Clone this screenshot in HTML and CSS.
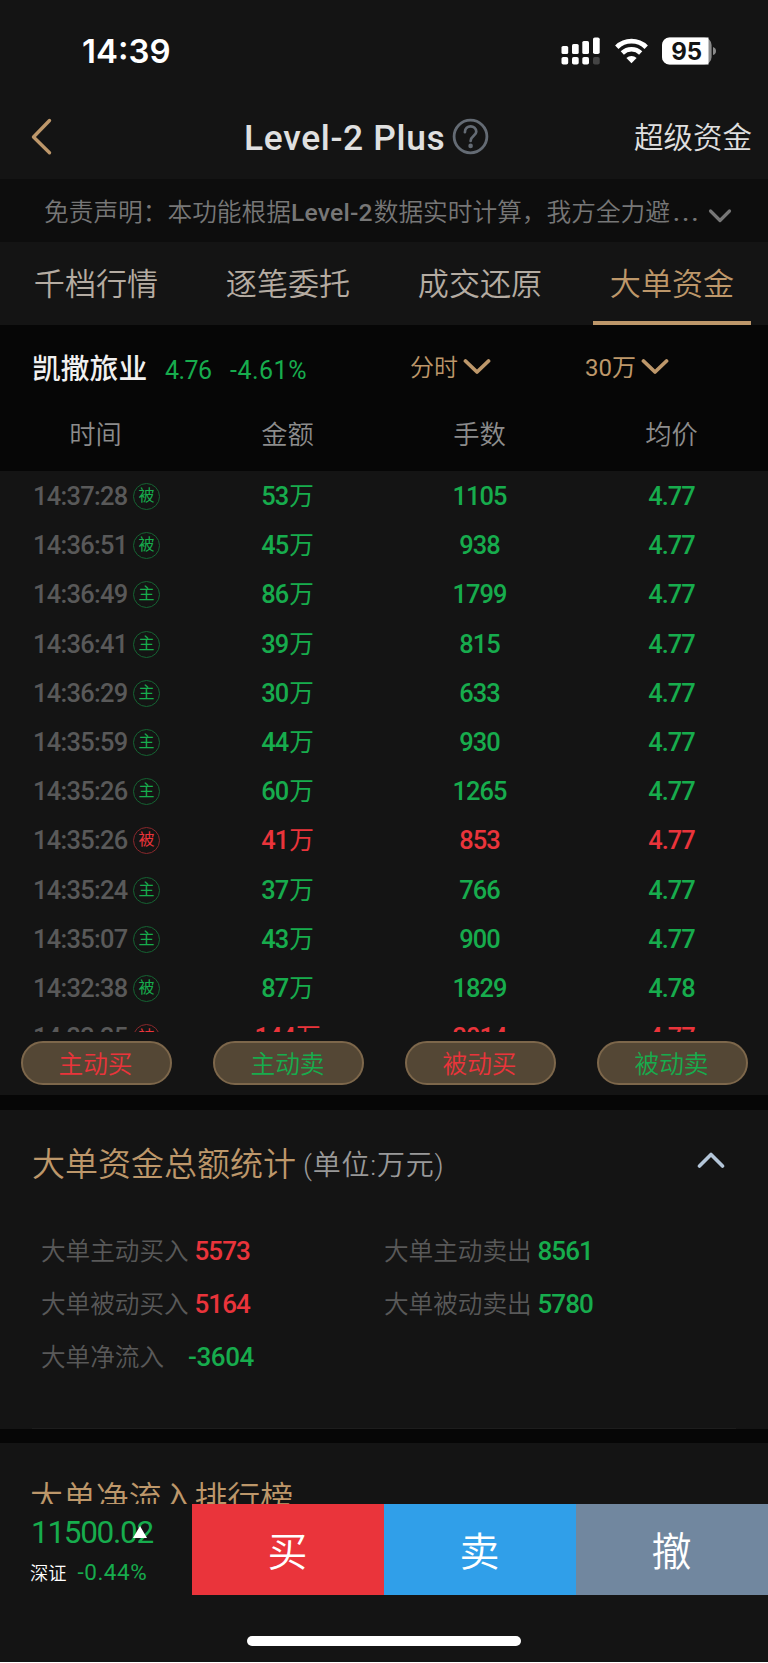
FILE: index.html
```
<!DOCTYPE html>
<html lang="zh-CN">
<head>
<meta charset="utf-8">
<title>Level-2 Plus</title>
<link rel="stylesheet" href="styles.css">
</head>
<body>
<div class="app">
  <header class="status">
    <span class="clock">14:39</span>
    <div class="status-icons">
      <svg class="signal" width="40" height="28" viewBox="0 0 40 28" fill="#fff">
        <rect x="0.5" y="9" width="6.7" height="8" rx="1.6"/><rect x="11" y="7" width="6.7" height="10" rx="1.6"/><rect x="21.3" y="4" width="6.7" height="13" rx="1.6"/><rect x="32" y="0.5" width="6.7" height="16.5" rx="1.8"/>
        <rect x="0.5" y="20" width="6.7" height="7.6" rx="1.8"/><rect x="11" y="20" width="6.7" height="7.6" rx="1.8"/><rect x="21.3" y="20" width="6.7" height="7.6" rx="1.8"/><rect x="32" y="20" width="6.7" height="7.6" rx="1.8" fill="#444"/>
      </svg>
      <svg class="wifi" width="33" height="26" viewBox="0 0 33 26" fill="none" stroke="#fff">
        <path d="M1.8 9.2A21 21 0 0 1 31.2 9.2" stroke-width="4.8"/>
        <path d="M7.3 15A13.2 13.2 0 0 1 25.7 15" stroke-width="4.6"/>
        <path d="M16.5 25.2L11.4 20A7.4 7.4 0 0 1 21.6 20Z" fill="#fff" stroke="none"/>
      </svg>
      <svg class="battery" width="55" height="28" viewBox="0 0 55 28">
        <rect x="0" y="0.5" width="49.6" height="27" rx="7.5" fill="#8a8a8a"/>
        <path d="M7.5 0.5H46.5V27.5H7.5A7.5 7.5 0 0 1 0 20V8A7.5 7.5 0 0 1 7.5 .5Z" fill="#fff"/>
        <path d="M51 10Q54 11 54 14T51 18Z" fill="#8a8a8a"/>
        <text class="battery-text" x="24.6" y="22.8" text-anchor="middle">95</text>
      </svg>
    </div>
  </header>

  <nav class="nav">
    <svg class="back" width="22" height="38" viewBox="0 0 22 38" fill="none" stroke="#bd976a" stroke-width="3.4" stroke-linecap="round" stroke-linejoin="round"><path d="M18.5 2.5L2.5 19L18.5 34.8"/></svg>
    <h1 class="title">Level-2 Plus</h1>
    <svg class="help" width="37" height="37" viewBox="0 0 37 37" fill="none" stroke="#646b74"><circle cx="18.5" cy="18.5" r="16.4" stroke-width="2.8"/><path d="M12.9 14.2C12.9 6.4 24.3 6.6 24.3 13.8C24.3 17.6 18.6 18.2 18.6 23" stroke-width="2.7" stroke-linecap="round"/><circle cx="18.6" cy="27.9" r="2.3" fill="#646b74" stroke="none"/></svg>
    <a class="nav-link">超级资金</a>
  </nav>

  <div class="notice">
    <span>免责声明：本功能根据<span class="notice-latin">Level-2</span>数据实时计算，我方全力避<span class="dots">...</span></span>
    <svg width="24" height="16" viewBox="0 0 24 16" fill="none" stroke="#777" stroke-width="3.2" stroke-linecap="round" stroke-linejoin="round"><path d="M2.5 3L12 12.5L21.5 3"/></svg>
  </div>

  <div class="tabs">
    <div class="tab">千档行情</div><div class="tab">逐笔委托</div><div class="tab">成交还原</div><div class="tab active">大单资金</div>
  </div>

  <section class="quote">
    <span class="stock">凯撒旅业</span>
    <span class="price">4.76</span>
    <span class="change">-4.61%</span>
    <span class="select period">分时<svg width="28" height="18" viewBox="0 0 28 18" fill="none" stroke="#bd976a" stroke-width="3.8" stroke-linecap="round" stroke-linejoin="round"><path d="M2.5 3L14 14L25.5 3"/></svg></span>
    <span class="select amount">30万<svg width="28" height="18" viewBox="0 0 28 18" fill="none" stroke="#bd976a" stroke-width="3.8" stroke-linecap="round" stroke-linejoin="round"><path d="M2.5 3L14 14L25.5 3"/></svg></span>
  </section>
  <div class="thead"><span>时间</span><span>金额</span><span>手数</span><span>均价</span></div>

  <section class="orders">
    <div class="list">
      <div class="row down"><span class="time">14:37:28<i class="badge">被</i></span><b>53<em>万</em></b><b>1105</b><b>4.77</b></div>
      <div class="row down"><span class="time">14:36:51<i class="badge">被</i></span><b>45<em>万</em></b><b>938</b><b>4.77</b></div>
      <div class="row down"><span class="time">14:36:49<i class="badge">主</i></span><b>86<em>万</em></b><b>1799</b><b>4.77</b></div>
      <div class="row down"><span class="time">14:36:41<i class="badge">主</i></span><b>39<em>万</em></b><b>815</b><b>4.77</b></div>
      <div class="row down"><span class="time">14:36:29<i class="badge">主</i></span><b>30<em>万</em></b><b>633</b><b>4.77</b></div>
      <div class="row down"><span class="time">14:35:59<i class="badge">主</i></span><b>44<em>万</em></b><b>930</b><b>4.77</b></div>
      <div class="row down"><span class="time">14:35:26<i class="badge">主</i></span><b>60<em>万</em></b><b>1265</b><b>4.77</b></div>
      <div class="row up"><span class="time">14:35:26<i class="badge">被</i></span><b>41<em>万</em></b><b>853</b><b>4.77</b></div>
      <div class="row down"><span class="time">14:35:24<i class="badge">主</i></span><b>37<em>万</em></b><b>766</b><b>4.77</b></div>
      <div class="row down"><span class="time">14:35:07<i class="badge">主</i></span><b>43<em>万</em></b><b>900</b><b>4.77</b></div>
      <div class="row down"><span class="time">14:32:38<i class="badge">被</i></span><b>87<em>万</em></b><b>1829</b><b>4.78</b></div>
      <div class="row up"><span class="time">14:32:25<i class="badge">被</i></span><b>144<em>万</em></b><b>3014</b><b>4.77</b></div>
    </div>
    <div class="filters">
      <button class="pill up">主动买</button><button class="pill down">主动卖</button><button class="pill up">被动买</button><button class="pill down">被动卖</button>
    </div>
  </section>

  <section class="totals">
    <div class="section-head">
      <h2>大单资金总额统计</h2><span class="unit">(单位:万元)</span>
      <svg width="28" height="18" viewBox="0 0 28 18" fill="none" stroke="#b4c6d9" stroke-width="3.6" stroke-linecap="round" stroke-linejoin="round"><path d="M2.5 15L14 3.5L25.5 15"/></svg>
    </div>
    <div class="stats">
      <div class="stat up">大单主动买入<b>5573</b></div><div class="stat down">大单主动卖出<b>8561</b></div>
      <div class="stat up">大单被动买入<b>5164</b></div><div class="stat down">大单被动卖出<b>5780</b></div>
      <div class="stat down net">大单净流入<b>-3604</b></div>
    </div>
    <div class="rule"></div>
  </section>

  <section class="ranking"><h2>大单净流入排行榜</h2></section>

  <footer class="trade">
    <div class="index">
      <div class="index-value">11500.02<svg class="marker" width="14" height="12" viewBox="0 0 14 12"><path d="M7 0L14 12H0Z" fill="#fff"/></svg></div>
      <div class="index-line">深证<span>-0.44%</span></div>
    </div>
    <button class="act buy">买</button><button class="act sell">卖</button><button class="act cancel">撤</button>
  </footer>
  <div class="home"><div class="home-bar"></div></div>
</div>
</body>
</html>
```
FILE: styles.css
```
* { box-sizing: border-box; }
body { margin: 0; background: #fff; font-family: Roboto, "Noto Sans CJK SC", sans-serif; }
h1, h2 { margin: 0; font-weight: 350; }
button { padding: 0; border: 0; font-family: inherit; font-weight: 350; }
svg { display: block; flex: none; }
.app { width: 768px; height: 1662px; background: #141414; overflow: hidden; font-weight: 350; display: flex; flex-direction: column; }
.app > * { flex: none; }

.status { height: 96px; display: flex; justify-content: space-between; padding: 0 51px 0 82px; }
.clock { font: 600 33px/103px Inter, sans-serif; color: #fff; letter-spacing: 0; }
.status-icons { display: flex; align-items: flex-start; padding-top: 37px; }
.wifi { margin: 1px 0 0 14px; }
.battery { margin-left: 14px; }
.battery-text { font: 700 24px Inter, sans-serif; fill: #141414; }

.nav { height: 83px; display: flex; align-items: center; padding: 0 16px 0 31px; }
.back { margin-top: -2px; }
.title { margin-left: 191px; width: 201px; white-space: nowrap; font-size: 35.4px; font-weight: 500; line-height: 83px; padding-top: 2px; letter-spacing: 0.65px; color: #e0e0e0; }
.help { margin: -3px 0 0 7px; }
.nav-link { margin-left: auto; font-size: 29.5px; line-height: 83px; padding-top: 2px; color: #e0e0e0; }

.notice { height: 63px; background: #0d0d0d; display: flex; align-items: center; padding: 0 36px 0 44px; justify-content: space-between; white-space: nowrap; font-size: 24.7px; line-height: 61px; color: #777; }
.notice > span { padding-top: 4px; }
.notice-latin { font-weight: 500; letter-spacing: 0.2px; margin-right: 1px; }
.dots { font-weight: 500; letter-spacing: 2.4px; margin-left: 3px; }
.notice svg { margin-top: 10px; }

.tabs { height: 83px; display: grid; grid-template-columns: repeat(4, 1fr); padding: 0; }
.tab { text-align: center; font-size: 31.1px; line-height: 85px; height: 83px; color: #b5aca2; }
.tab.active { margin: 0 17px; color: #bd976a; border-bottom: 4px solid #bd976a; }

.quote { height: 85px; background: #060606; display: flex; align-items: center; padding-left: 32px; line-height: 85px; white-space: nowrap; font-size: 25px; color: #17ac4d; }
.stock { width: 133px; font-size: 28.8px; font-weight: 500; color: #f0f0f0; padding-top: 4px; }
.price { width: 65px; font-weight: 400; letter-spacing: -0.6px; padding-top: 5px; }
.change { width: 180px; font-weight: 400; letter-spacing: 0.5px; padding-top: 5px; }
.select { display: flex; align-items: center; font-size: 24px; color: #bd976a; gap: 5px; padding-top: 2px; }
.amount { font-weight: 400; }
.period { width: 175px; }
.select svg { margin-top: -4px; }

.thead { height: 61px; background: #060606; display: grid; grid-template-columns: repeat(4, 1fr); text-align: center; font-size: 26.3px; line-height: 50px; color: #8c8c8c; }
.thead span { padding-right: 1px; }

.orders { height: 624px; }
.list { height: 561px; padding-top: 1px; overflow: hidden; }
.row { height: 49.2px; line-height: 49.2px; display: grid; grid-template-columns: repeat(4, 1fr); text-align: center; font-size: 25.4px; }
.row b { font-weight: 500; letter-spacing: -0.9px; padding-right: 1px; }
.row em { font-style: normal; font-weight: 400; font-size: 24.6px; letter-spacing: 0; margin-left: 1px; }
.time { display: flex; align-items: center; padding-left: 33px; color: #595959; font-weight: 500; letter-spacing: -0.7px; text-align: left; position: relative; }
.badge { position: absolute; left: 133px; top: 11px; width: 27px; height: 27px; border: 1.5px solid; border-radius: 50%; font-style: normal; font-weight: 400; font-size: 16px; line-height: 24px; text-align: center; letter-spacing: 0; }
.up b, .up.pill { color: #ea343b; }
.down b, .down.pill { color: #17ac4d; }
.up .badge { color: #ea343b; border-color: #8a282c; }
.down .badge { color: #17ac4d; border-color: #156332; }
.filters { display: grid; grid-template-columns: repeat(4, 1fr); padding-top: 9px; justify-items: center; }
.pill { width: 151px; height: 44px; border: 2px solid #7d674b; border-radius: 22px; background: #544735; font-size: 24.7px; line-height: 38px; padding: 3px 1px 0 0; }

.totals { height: 334px; border-top: 15px solid #060606; padding: 0 32px; display: flex; flex-direction: column; }
.section-head { display: flex; align-items: center; height: 106px; padding: 0 11px 0 0; }
h2 { font-size: 33px; line-height: 100px; padding-top: 3px; color: #bd976a; }
.unit { margin-left: 7px; font-size: 28px; color: #999; line-height: 100px; padding-top: 5px; letter-spacing: 0.8px; }
.section-head svg { margin: -6px 0 0 auto; }
.stats { display: grid; grid-template-columns: 343px 1fr; grid-auto-rows: 53.2px; padding: 9px 0 0 9px; }
.stat { display: flex; font-size: 24.6px; line-height: 53.2px; color: #595959; white-space: nowrap; }
.stat b { margin-left: 6px; font-size: 26px; font-weight: 500; letter-spacing: -1px; }
.stat.net b { margin-left: 24px; letter-spacing: -0.4px; }
.rule { margin-top: auto; height: 1px; background: #1d1d1d; }

.ranking { height: 75px; border-top: 14px solid #060606; padding-left: 30px; overflow: hidden; }
.ranking h2 { line-height: 112px; padding-top: 0; font-size: 32.9px; }

.trade { height: 91px; display: grid; grid-template-columns: repeat(4, 1fr); grid-template-rows: 91px; }
.index { padding-left: 31px; color: #17ac4d; }
.index-value { position: relative; font-size: 31.5px; line-height: 58px; height: 54px; font-weight: 400; letter-spacing: -1.3px; }
.marker { position: absolute; left: 102px; top: 22px; }
.index-line { font-size: 18.3px; line-height: 28px; color: #fff; display: flex; align-items: baseline; margin-left: -1px; }
.index-line span { margin-left: 11px; font-size: 22.5px; font-weight: 400; letter-spacing: 0.5px; color: #17ac4d; }
.act { font-size: 40px; line-height: 84px; padding: 7px 1px 0 0; color: #fff; }
.buy { background: #ea343b; }
.sell { background: #309fe9; }
.cancel { background: #71879f; }
.home { height: 67px; display: flex; justify-content: center; padding-top: 41px; }
.home-bar { width: 274px; height: 10px; border-radius: 5px; background: #fff; }
```
